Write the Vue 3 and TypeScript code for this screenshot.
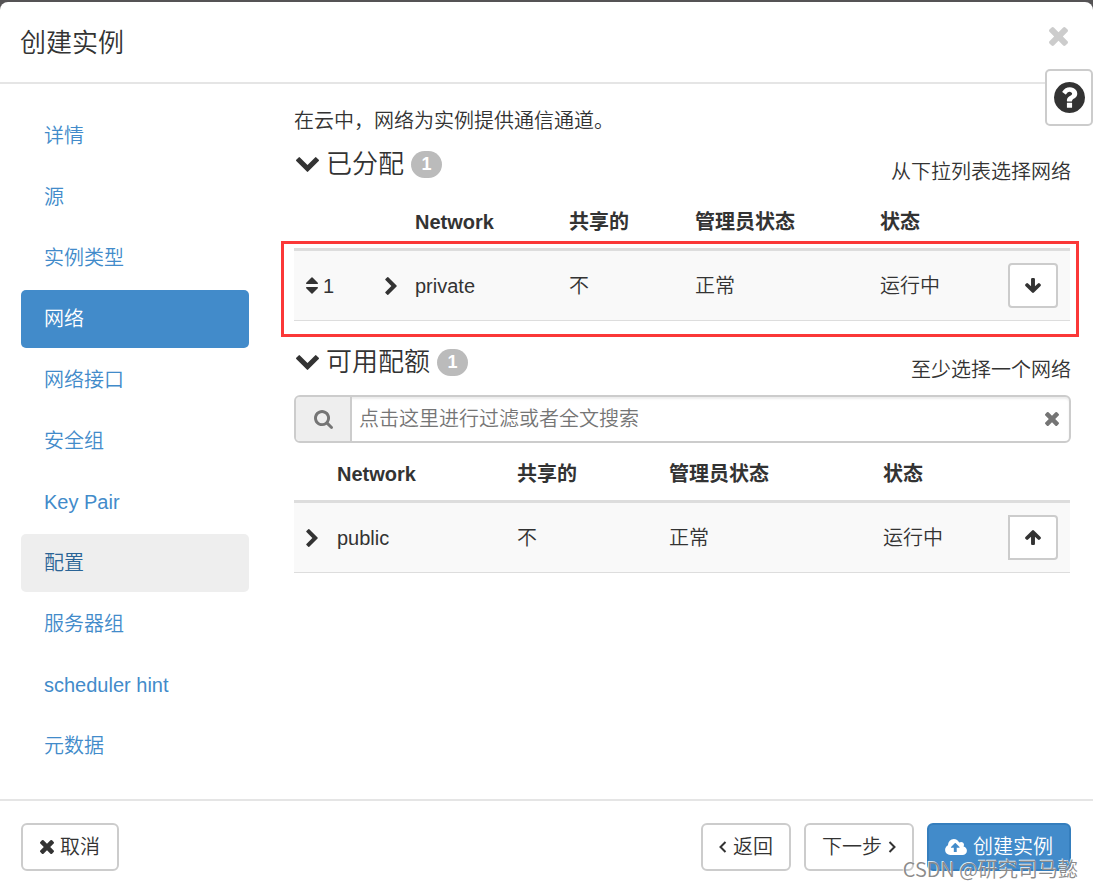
<script setup lang="ts">
import { ref } from 'vue'

interface Network {
  name: string
  shared: string
  adminState: string
  status: string
}

const icons = {
  close: { box: '302 366 1188 1188', d: 'M1490 1322q0 40-28 68l-136 136q-28 28-68 28t-68-28l-294-294-294 294q-28 28-68 28t-68-28l-136-136q-28-28-28-68t28-68l294-294-294-294q-28-28-28-68t28-68l136-136q28-28 68-28t68 28l294 294 294-294q28-28 68-28t68 28l136 136q28 28 28 68t-28 68l-294 294 294 294q28 28 28 68z' },
  help: { box: '128 128 1536 1536', d: 'M1024 1376v-192q0-14-9-23t-23-9h-192q-14 0-23 9t-9 23v192q0 14 9 23t23 9h192q14 0 23-9t9-23zm256-672q0-88-55.500-163t-138.500-116-170-41q-243 0-371 213-15 24 8 42l132 100q7 6 19 6 16 0 25-12 53-68 86-92 34-24 86-24 48 0 85.500 26t37.500 59q0 38-20 61t-68 45q-63 28-115.500 86.500t-52.500 125.500v36q0 14 9 23t23 9h192q14 0 23-9t9-23q0-19 21.500-49.500t54.500-49.500q32-18 49-28.500t46-35 44.500-48 28-60.500 12.500-81zm384 192q0 209-103 385.500t-279.500 279.500-385.500 103-385.500-103-279.500-279.500-103-385.500 103-385.500 279.500-279.500 385.500-103 385.500 103 279.500 279.500 103 385.500z' },
  down: { box: '90 533 1612 1035', d: 'M1683 808l-742 741q-19 19-45 19t-45-19l-742-741q-19-19-19-45.500t19-45.500l166-165q19-19 45-19t45 19l531 531 531-531q19-19 45-19t45 19l166 165q19 19 19 45.500t-19 45.500z' },
  right: { box: '346 26 1036 1612', d: 'M1363 877l-742 742q-19 19-45 19t-45-19l-166-166q-19-19-19-45t19-45l531-531-531-531q-19-19-19-45t19-45l166-166q19-19 45-19t45 19l742 742q19 19 19 45t-19 45z' },
  sort: { box: '384 192 1024 1408', d: 'M1408 1088q0 26-19 45l-448 448q-19 19-45 19t-45-19l-448-448q-19-19-19-45t19-45 45-19h896q26 0 45 19t19 45zm0-384q0 26-19 45t-45 19h-896q-26 0-45-19t-19-45 19-45l448-448q19-19 45-19t45 19l448 448q19 19 19 45z' },
  arrow: { box: '117 192 1558 1472', d: 'M1675 971q0 51-37 90l-75 75q-38 38-91 38-54 0-90-38l-294-293v704q0 52-37.500 84.500t-90.500 32.500h-128q-53 0-90.500-32.500t-37.500-84.500v-704l-294 293q-36 38-90 38t-90-38l-75-75q-38-38-38-90 0-53 38-91l651-651q35-37 90-37 54 0 91 37l651 651q37 39 37 91z' },
  search: { box: '64 128 1664 1664', d: 'M1216 832q0-185-131.500-316.500t-316.500-131.500-316.500 131.500-131.500 316.500 131.500 316.500 316.500 131.500 316.500-131.500 131.500-316.500zm512 832q0 52-38 90t-90 38q-54 0-90-38l-343-342q-179 124-399 124-143 0-273.500-55.500t-225-150-150-225-55.500-273.500 55.500-273.500 150-225 225-150 273.500-55.500 273.500 55.500 225 150 150 225 55.500 273.500q0 220-124 399l343 343q37 37 37 90z' },
  cloud: { box: '0 192 1920 1408', d: 'M1280 928q0-14-9-23l-352-352q-9-9-23-9t-23 9l-351 351q-10 12-10 24 0 14 9 23t23 9h224v352q0 13 9.500 22.500t22.500 9.500h192q13 0 22.500-9.500t9.500-22.500v-352h224q13 0 22.500-9.500t9.500-22.500zm640 288q0 159-112.500 271.500t-271.500 112.500h-1088q-185 0-316.500-131.500t-131.500-316.500q0-130 70-240t188-165q-2-30-2-43 0-212 150-362t362-150q156 0 285.500 87t188.500 231q71-62 166-62 106 0 181 75t75 181q0 76-41 138 130 31 213.500 135.500t83.500 238.500z' },
}

const steps = ['详情', '源', '实例类型', '网络', '网络接口', '安全组', 'Key Pair', '配置', '服务器组', 'scheduler hint', '元数据']
const activeStep = ref('网络')
const highlightedStep = '配置'

const columns = ['Network', '共享的', '管理员状态', '状态']
const allocated: Network[] = [{ name: 'private', shared: '不', adminState: '正常', status: '运行中' }]
const available: Network[] = [{ name: 'public', shared: '不', adminState: '正常', status: '运行中' }]
const filter = ref('')
</script>

<template>
  <div class="backdrop">
    <div class="modal" role="dialog" aria-labelledby="modal-title">
      <header class="modal-header">
        <h1 id="modal-title">创建实例</h1>
        <button type="button" class="plain close" aria-label="关闭">
          <svg class="i-close" :viewBox="icons.close.box"><path :d="icons.close.d" /></svg>
        </button>
      </header>
      <button type="button" class="help" aria-label="帮助">
        <svg class="i-help" :viewBox="icons.help.box"><path :d="icons.help.d" /></svg>
      </button>

      <div class="modal-body">
        <nav class="steps">
          <a
            v-for="step in steps"
            :key="step"
            href="#"
            class="step"
            :class="{ active: step === activeStep, highlighted: step === highlightedStep }"
            @click.prevent="activeStep = step"
          >{{ step }}</a>
        </nav>

        <main class="content">
          <p class="intro">在云中，网络为实例提供通信通道。</p>

          <section class="allocated">
            <div class="section-head">
              <h2>
                <svg class="i-down" :viewBox="icons.down.box"><path :d="icons.down.d" /></svg>
                <span>已分配</span>
                <span class="badge">{{ allocated.length }}</span>
              </h2>
              <span class="hint">从下拉列表选择网络</span>
            </div>
            <div class="table-wrap">
              <table>
                <colgroup>
                  <col class="a-order"><col class="a-expand"><col class="a-name"><col class="a-shared"><col class="a-admin"><col class="a-status"><col class="action">
                </colgroup>
                <thead>
                  <tr>
                    <th></th>
                    <th></th>
                    <th v-for="c in columns" :key="c">{{ c }}</th>
                    <th></th>
                  </tr>
                </thead>
                <tbody>
                  <tr v-for="(n, i) in allocated" :key="n.name">
                    <td>
                      <span class="order">
                        <svg class="i-sort" :viewBox="icons.sort.box"><path :d="icons.sort.d" /></svg>
                        {{ i + 1 }}
                      </span>
                    </td>
                    <td>
                      <button type="button" class="plain" aria-label="展开">
                        <svg class="i-right" :viewBox="icons.right.box"><path :d="icons.right.d" /></svg>
                      </button>
                    </td>
                    <td>{{ n.name }}</td>
                    <td>{{ n.shared }}</td>
                    <td>{{ n.adminState }}</td>
                    <td>{{ n.status }}</td>
                    <td>
                      <button type="button" class="move" aria-label="移除">
                        <svg class="i-arrow flip" :viewBox="icons.arrow.box"><path :d="icons.arrow.d" /></svg>
                      </button>
                    </td>
                  </tr>
                </tbody>
              </table>
              <div class="marker"></div>
            </div>
          </section>

          <section>
            <div class="section-head">
              <h2>
                <svg class="i-down" :viewBox="icons.down.box"><path :d="icons.down.d" /></svg>
                <span>可用配额</span>
                <span class="badge">{{ available.length }}</span>
              </h2>
              <span class="hint">至少选择一个网络</span>
            </div>
            <div class="search">
              <label for="filter" class="search-label" aria-label="搜索">
                <svg class="i-search" :viewBox="icons.search.box"><path :d="icons.search.d" /></svg>
              </label>
              <input id="filter" v-model="filter" type="text" placeholder="点击这里进行过滤或者全文搜索">
              <button type="button" class="plain clear" aria-label="清除" @click="filter = ''">
                <svg class="i-small" :viewBox="icons.close.box"><path :d="icons.close.d" /></svg>
              </button>
            </div>
            <div class="table-wrap">
              <table>
                <colgroup>
                  <col class="b-expand"><col class="b-name"><col class="b-shared"><col class="b-admin"><col class="b-status"><col class="action">
                </colgroup>
                <thead>
                  <tr>
                    <th></th>
                    <th v-for="c in columns" :key="c">{{ c }}</th>
                    <th></th>
                  </tr>
                </thead>
                <tbody>
                  <tr v-for="n in available" :key="n.name">
                    <td>
                      <button type="button" class="plain" aria-label="展开">
                        <svg class="i-right" :viewBox="icons.right.box"><path :d="icons.right.d" /></svg>
                      </button>
                    </td>
                    <td>{{ n.name }}</td>
                    <td>{{ n.shared }}</td>
                    <td>{{ n.adminState }}</td>
                    <td>{{ n.status }}</td>
                    <td>
                      <button type="button" class="move joined" aria-label="分配">
                        <svg class="i-arrow" :viewBox="icons.arrow.box"><path :d="icons.arrow.d" /></svg>
                      </button>
                    </td>
                  </tr>
                </tbody>
              </table>
            </div>
          </section>
        </main>
      </div>

      <footer class="modal-footer">
        <button type="button" class="btn cancel">
          <svg class="i-small" :viewBox="icons.close.box"><path :d="icons.close.d" /></svg>
          取消
        </button>
        <button type="button" class="btn">
          <svg class="i-angle" viewBox="0 0 8 12"><path d="M6.500 1 1.500 6l5 5" /></svg>
          返回
        </button>
        <button type="button" class="btn">
          下一步
          <svg class="i-angle" viewBox="0 0 8 12"><path d="m1.500 1 5 5-5 5" /></svg>
        </button>
        <button type="button" class="btn primary">
          <svg class="i-cloud" :viewBox="icons.cloud.box"><path :d="icons.cloud.d" /></svg>
          创建实例
        </button>
      </footer>
      <div class="watermark">CSDN @研究司马懿</div>
    </div>
  </div>
</template>

<style>
body {
  margin: 0;
  background: #555355;
}
</style>

<style scoped>
.backdrop,
.backdrop * {
  box-sizing: border-box;
}
.backdrop {
  padding-top: 2px;
  min-height: 100vh;
  display: flex;
  flex-direction: column;
  overflow: hidden;
}
.modal {
  position: relative;
  flex: 1;
  background: #fff;
  border-radius: 8px 8px 0 0;
  color: #333;
  font-family: "Liberation Sans", "Noto Sans CJK SC", sans-serif;
  font-size: 20px;
  font-weight: 350;
  line-height: 28px;
}
button,
input {
  font: inherit;
  color: inherit;
}
button {
  cursor: pointer;
}
svg {
  display: block;
  flex: none;
  fill: currentColor;
}
.plain {
  display: block;
  padding: 0;
  border: 0;
  background: none;
}
.modal-header {
  display: flex;
  justify-content: space-between;
  align-items: flex-start;
  padding: 21px 25px 19px 20px;
  border-bottom: 2px solid #e5e5e5;
}
h1 {
  margin: 0;
  font-size: 26px;
  font-weight: 350;
  line-height: 40px;
}
.close {
  margin-top: 4px;
  color: #ccc;
}
.help {
  position: absolute;
  top: 67px;
  right: 0;
  display: flex;
  align-items: center;
  justify-content: center;
  width: 48px;
  height: 57px;
  padding: 0;
  background: #fff;
  border: 2px solid #ccc;
  border-radius: 5px;
}
.modal-body {
  display: grid;
  grid-template-columns: 228px minmax(0, 1fr);
  gap: 45px;
  padding: 23px 22px 24px 21px;
}
.steps {
  display: flex;
  flex-direction: column;
  gap: 3px;
}
.step {
  padding: 15px 23px;
  border-radius: 5px;
  color: #428bca;
  text-decoration: none;
}
.step.highlighted {
  background: #eee;
  color: #2a6496;
}
.step.active {
  background: #428bca;
  color: #fff;
}
.intro {
  margin: 0 0 7px;
}
.allocated {
  margin-bottom: 19px;
}
.section-head {
  display: flex;
  justify-content: space-between;
  align-items: flex-start;
  margin-bottom: 10px;
}
h2 {
  display: flex;
  align-items: center;
  gap: 7px;
  margin: 0;
  padding-left: 2px;
  font-size: 26px;
  font-weight: 350;
  line-height: 44px;
}
.badge {
  width: 31px;
  border-radius: 14px;
  background: #bbb;
  color: #fff;
  font-size: 18px;
  font-weight: 700;
  line-height: 27px;
  text-align: center;
}
.hint {
  padding-top: 16px;
  line-height: 28px;
}
.table-wrap {
  position: relative;
  margin-right: 1px;
}
.marker {
  position: absolute;
  left: -13px;
  right: -9px;
  bottom: -16px;
  height: 96px;
  border: 3px solid #fb3838;
  pointer-events: none;
}
table {
  width: 100%;
  table-layout: fixed;
  border-collapse: separate;
  border-spacing: 0;
}
th,
td {
  padding: 12px 0 12px 12px;
  text-align: left;
  white-space: nowrap;
}
th {
  height: 55px;
  border-bottom: 3px solid #ddd;
  font-weight: 700;
}
td {
  background: #f9f9f9;
  border-bottom: 1px solid #ddd;
}
.a-order { width: 79px; }
.a-expand { width: 30px; }
.a-name { width: 154px; }
.a-shared { width: 126px; }
.a-admin { width: 185px; }
.a-status { width: 128px; }
.b-expand { width: 31px; }
.b-name { width: 180px; }
.b-shared { width: 152px; }
.b-admin { width: 214px; }
.b-status { width: 125px; }
.action { width: 74px; }
.order {
  display: flex;
  align-items: center;
  gap: 5px;
}
.move {
  display: flex;
  align-items: center;
  justify-content: center;
  width: 50px;
  height: 45px;
  padding: 0;
  background: #fff;
  border: 2px solid #ccc;
  border-radius: 4px;
}
.move.joined {
  border-radius: 0 4px 4px 0;
}
.search {
  display: flex;
  align-items: stretch;
  height: 48px;
  margin: 11px 0 5px;
  border: 2px solid #ccc;
  border-radius: 6px;
  box-shadow: inset 0 2px 2px rgba(0, 0, 0, 0.08);
  overflow: hidden;
  color: #757575;
}
.search-label {
  display: flex;
  align-items: center;
  justify-content: center;
  width: 56px;
  background: #eee;
  border-right: 2px solid #ccc;
}
.search input {
  flex: 1;
  min-width: 0;
  padding: 0 7px;
  border: 0;
  outline: 0;
  background: none;
}
.search input::placeholder {
  color: #757575;
  opacity: 1;
}
.clear {
  padding: 0 10px;
}
.modal-footer {
  display: flex;
  gap: 13px;
  padding: 22px 22px 16px 21px;
  border-top: 2px solid #e5e5e5;
}
.btn {
  display: flex;
  align-items: center;
  gap: 6px;
  height: 48px;
  padding: 0 16px;
  background: #fff;
  border: 2px solid #ccc;
  border-radius: 6px;
  white-space: nowrap;
}
.btn.cancel {
  margin-right: auto;
  padding: 0 17px;
}
.primary {
  background: #428bca;
  border-color: #357ebd;
  color: #fff;
}
.watermark {
  position: absolute;
  right: 15px;
  bottom: 4px;
  color: #8b8b8b;
  font-family: "Noto Sans CJK SC", sans-serif;
  text-shadow: -1px -1px 0 rgba(255, 255, 255, 0.8);
  pointer-events: none;
}
.i-close { width: 19px; height: 19px; }
.i-help { width: 31px; height: 31px; }
.i-down { width: 23px; height: 15px; }
.i-right { width: 12px; height: 18px; }
.i-sort { width: 12px; height: 17px; }
.i-arrow { width: 16px; height: 15px; }
.i-search { width: 19px; height: 19px; }
.i-small { width: 14px; height: 14px; }
.i-cloud { width: 22px; height: 16px; }
.i-angle {
  width: 8px;
  height: 12px;
  fill: none;
  stroke: currentColor;
  stroke-width: 2px;
}
.flip { transform: rotate(180deg); }
</style>
